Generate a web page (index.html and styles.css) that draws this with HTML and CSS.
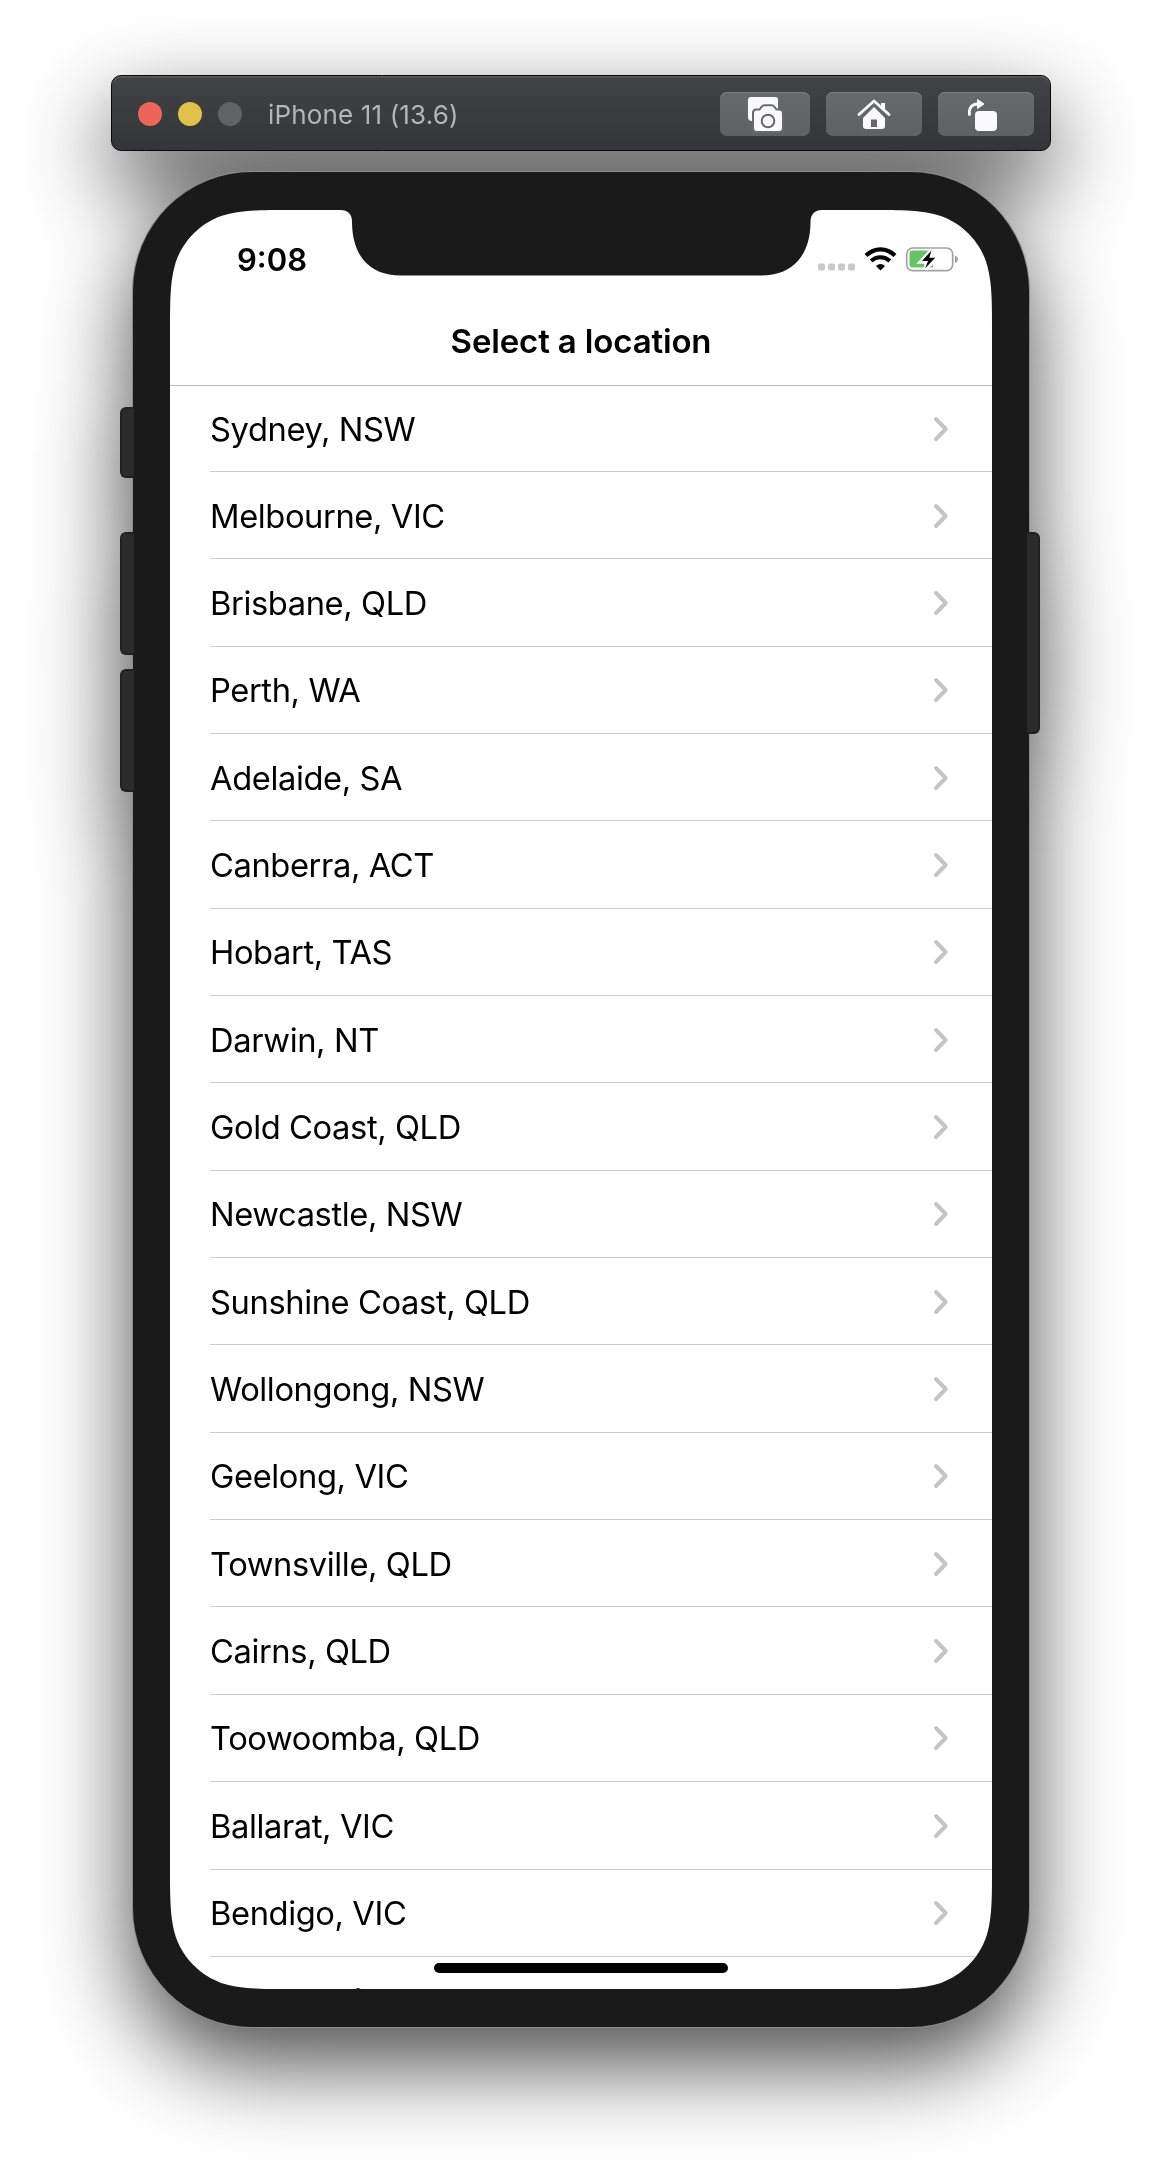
FILE: index.html
```html
<!DOCTYPE html>
<html lang="en">
<head>
<meta charset="utf-8">
<title>iPhone 11 (13.6)</title>
<link rel="stylesheet" href="styles.css">
</head>
<body>
<svg class="defs" width="0" height="0" aria-hidden="true">
  <symbol id="chevron" viewBox="0 0 16 26"><path d="M3 3l9.700 10L3 23" fill="none" stroke="#c5c5c7" stroke-width="4" stroke-linecap="round" stroke-linejoin="round"/></symbol>
</svg>
<div class="simulator">
  <header class="toolbar">
    <div class="lights"><i class="light close"></i><i class="light minimize"></i><i class="light disabled"></i></div>
    <h1 class="device-name">iPhone 11 (13.6)</h1>
    <div class="actions">
      <button class="action shot" aria-label="Screenshot">
        <svg width="90" height="44" viewBox="0 0 90 44">
          <path d="M31 5h24q3 0 3 3v10H36q-4 0-4 4v7q-4 0-4-4V8q0-3 3-3z" fill="#fafafc"/>
          <path d="M36.500 18.500h3.500l2.500-3.200q.8-1 2-1h7q1.200 0 2 1l2.500 3.200h3q3 0 3 3V36q0 3-3 3H37q-3 0-3-3V21.500q0-3 2.500-3z" fill="none" stroke="#69696b" stroke-width="4"/>
          <path d="M36.500 18.500h3.500l2.500-3.200q.8-1 2-1h7q1.200 0 2 1l2.500 3.200h3q3 0 3 3V36q0 3-3 3H37q-3 0-3-3V21.500q0-3 2.500-3z" fill="#fafafc"/>
          <circle cx="48" cy="29" r="6.300" fill="#fafafc" stroke="#656668" stroke-width="1.900"/>
        </svg>
      </button>
      <button class="action" aria-label="Home">
        <svg width="96" height="44" viewBox="0 0 96 44">
          <path d="M37 26L48 15l11 11v8q0 3-3 3H40q-3 0-3-3z" fill="#fafafc"/>
          <path d="M33 23L48 9.500 63 23" fill="none" stroke="#666769" stroke-width="6"/>
          <path d="M33 22.500L48 9l15 13.500" fill="none" stroke="#fafafc" stroke-width="2.800" stroke-linecap="round" stroke-linejoin="round"/>
          <path d="M55 11h4v7.500l-4-3.500z" fill="#fafafc"/>
          <path d="M45 27.500h6V35h-6z" fill="#656668"/>
        </svg>
      </button>
      <button class="action" aria-label="Rotate">
        <svg width="96" height="44" viewBox="0 0 96 44">
          <rect x="37" y="19" width="22" height="20" rx="4" fill="#fafafc"/>
          <path d="M31.500 22.500C30.500 16 34 12 40 12" fill="none" stroke="#fafafc" stroke-width="2.800" stroke-linecap="round"/>
          <path d="M39.500 7.500l6.500 4.500-6.500 4.500z" fill="#fafafc" stroke="#fafafc" stroke-width="1" stroke-linejoin="round"/>
        </svg>
      </button>
    </div>
  </header>
  <main class="phone">
    <i class="side-button mute"></i><i class="side-button volume-up"></i><i class="side-button volume-down"></i><i class="side-button power"></i>
    <section class="screen">
      <svg class="notch" width="482" height="66" viewBox="0 0 482 66"><path d="M0 0H482V0C475 0 470.500 4 470.500 12 470.500 44 454 65.500 421 65.500H61C28 65.500 12 44 12 12 12 4 8 0 0 0z" fill="#1a1a1a"/></svg>
      <div class="status">
        <time class="clock">9:08</time>
        <svg class="indicators" width="142" height="26" viewBox="0 0 142 26">
          <g fill="#c9c9ca"><rect x="0" y="16.500" width="7" height="7" rx="2"/><rect x="10" y="16.500" width="7" height="7" rx="2"/><rect x="20" y="16.500" width="7" height="7" rx="2"/><rect x="30" y="16.500" width="7" height="7" rx="2"/></g>
          <g fill="none" stroke="#000" stroke-width="4.200"><path d="M48 8.500C56.500.3 68.500.3 77 8.500"/><path d="M53.200 14C58.500 9 66.500 9 71.800 14"/></g>
          <path d="M58 19Q62.500 15 67 19L62.500 23.500z"/>
          <rect x="88.700" y="1" width="46" height="22.600" rx="6" fill="#fff" stroke="#a2a2a4" stroke-width="1.700"/>
          <path d="M137 8.500q3 1.200 3 3.800t-3 3.800z" fill="#a2a2a4"/>
          <path d="M94.500 3.500H115V20.500H94.500q-3 0-3-3v-11q0-3 3-3z" fill="#65c466"/>
          <path d="M114 3L103.500 14.500h6L107.500 22 117.500 11h-6z" stroke="#fff" stroke-width="4.500" fill="#fff"/>
          <path d="M113.500 3.500L104 14h6L107 21.500 117.300 10.800h-6z"/>
        </svg>
      </div>
      <h2 class="title">Select a location</h2>
      <ul class="list">
        <li class="row"><span>Sydney, NSW</span><svg class="chevron"><use href="#chevron"/></svg></li>
        <li class="row"><span>Melbourne, VIC</span><svg class="chevron"><use href="#chevron"/></svg></li>
        <li class="row"><span>Brisbane, QLD</span><svg class="chevron"><use href="#chevron"/></svg></li>
        <li class="row"><span>Perth, WA</span><svg class="chevron"><use href="#chevron"/></svg></li>
        <li class="row"><span>Adelaide, SA</span><svg class="chevron"><use href="#chevron"/></svg></li>
        <li class="row"><span>Canberra, ACT</span><svg class="chevron"><use href="#chevron"/></svg></li>
        <li class="row"><span>Hobart, TAS</span><svg class="chevron"><use href="#chevron"/></svg></li>
        <li class="row"><span>Darwin, NT</span><svg class="chevron"><use href="#chevron"/></svg></li>
        <li class="row"><span>Gold Coast, QLD</span><svg class="chevron"><use href="#chevron"/></svg></li>
        <li class="row"><span>Newcastle, NSW</span><svg class="chevron"><use href="#chevron"/></svg></li>
        <li class="row"><span>Sunshine Coast, QLD</span><svg class="chevron"><use href="#chevron"/></svg></li>
        <li class="row"><span>Wollongong, NSW</span><svg class="chevron"><use href="#chevron"/></svg></li>
        <li class="row"><span>Geelong, VIC</span><svg class="chevron"><use href="#chevron"/></svg></li>
        <li class="row"><span>Townsville, QLD</span><svg class="chevron"><use href="#chevron"/></svg></li>
        <li class="row"><span>Cairns, QLD</span><svg class="chevron"><use href="#chevron"/></svg></li>
        <li class="row"><span>Toowoomba, QLD</span><svg class="chevron"><use href="#chevron"/></svg></li>
        <li class="row"><span>Ballarat, VIC</span><svg class="chevron"><use href="#chevron"/></svg></li>
        <li class="row"><span>Bendigo, VIC</span><svg class="chevron"><use href="#chevron"/></svg></li>
        <li class="next-row"><i class="next-row-edge"></i></li>
      </ul>
      <i class="home-indicator"></i>
    </section>
  </main>
</div>
</body>
</html>
```
FILE: styles.css
```css
* { box-sizing: border-box; }
body { margin: 0; background: #fff; font-family: Inter, "Liberation Sans", sans-serif; color: #000; }
.defs { position: absolute; }
.simulator {
  width: 1162px; height: 2178px; padding-top: 75px; overflow: hidden;
  display: flex; flex-direction: column; align-items: center; gap: 21px;
  filter: drop-shadow(0 36px 44px rgba(0, 0, 0, .7));
}
.toolbar {
  width: 940px; height: 76px; flex: none; display: flex; align-items: center;
  padding: 2px 16px 0 26px; border: 1px solid #080909; border-radius: 10px;
  background: linear-gradient(#414344, #343536); box-shadow: inset 0 1.500px 0 #5a5c5d;
}
.lights { display: flex; gap: 16px; }
.light { width: 24px; height: 24px; border-radius: 50%; }
.close { background: #ee655b; }
.minimize { background: #e1c04c; }
.disabled { background: #616263; }
.device-name { margin: 0 0 0 26px; font-size: 26px; font-weight: 400; color: #b4b5b6; letter-spacing: .15px; white-space: nowrap; }
.actions { margin-left: auto; display: flex; gap: 16px; }
.action {
  width: 96px; height: 44px; padding: 0; border: 0; border-radius: 7px;
  background: linear-gradient(#68696b, #606162); box-shadow: inset 0 1px 0 #7d7e80;
}
.action svg { display: block; }
.shot { width: 90px; }
.phone {
  position: relative; width: 896px; height: 1855px; flex: none; padding: 38px 37px; border-radius: 119px;
  background: #1a1a1a; box-shadow: 0 0 0 1px #8c8c8c;
}
.side-button { position: absolute; left: -13px; width: 14px; border: 2px solid #202020; border-right: 0; border-radius: 6px 0 0 6px; background: #2b2b2b; }
.mute { top: 235px; height: 71px; }
.volume-up { top: 360px; height: 123px; }
.volume-down { top: 497px; height: 123px; }
.power { top: 360px; height: 202px; left: 894px; width: 13px; border: 2px solid #202020; border-left: 0; border-radius: 0 6px 6px 0; }
.screen {
  position: relative; width: 822px; height: 1779px; overflow: hidden; background: #fff;
  display: flex; flex-direction: column;
  clip-path: path("M123.800 0H698.200C733.800 0 751.700 0 770.850 6.070 791.800 13.700 808.300 30.200 815.930 51.150 822 70.300 822 88.200 822 123.800V1655.200C822 1690.800 822 1708.700 815.930 1727.850 808.300 1748.800 791.800 1765.300 770.850 1772.930 751.700 1779 733.800 1779 698.200 1779H123.800C88.200 1779 70.300 1779 51.150 1772.930 30.200 1765.300 13.700 1748.800 6.070 1727.850 0 1708.700 0 1690.800 0 1655.200V123.800C0 88.200 0 70.300 6.070 51.150 13.700 30.200 30.200 13.700 51.150 6.070 70.300 0 88.200 0 123.800 0z");
}
.notch { position: absolute; top: -.5px; left: 170px; }
.status { height: 88px; flex: none; display: flex; align-items: flex-start; justify-content: space-between; padding: 31px 32px 0 67px; }
.clock { font-size: 31px; line-height: 38px; font-weight: 600; letter-spacing: 0; }
.indicators { margin-top: 6px; }
.title { margin: 0; height: 88px; flex: none; border-bottom: 1px solid #bdbdbf; text-align: center; font-size: 33px; line-height: 87px; font-weight: 600; letter-spacing: -.15px; }
.list { margin: 0; padding: 0 0 0 40px; list-style: none; flex: none; }
.row { height: 87.350px; display: flex; align-items: center; justify-content: space-between; padding: 1px 43px 0 0; border-bottom: 1px solid #ccccce; font-size: 32.700px; letter-spacing: -.4px; white-space: nowrap; }
.row:first-child { height: 86px; }
.chevron { width: 16px; height: 26px; }
.next-row { height: 87.350px; padding: 31px 0 0 145px; }
.next-row-edge { display: block; width: 6px; height: 6px; border-radius: 50%; background: #333; }
.home-indicator { position: absolute; left: 264px; top: 1753px; width: 294px; height: 10px; border-radius: 5px; background: #000; }
```
